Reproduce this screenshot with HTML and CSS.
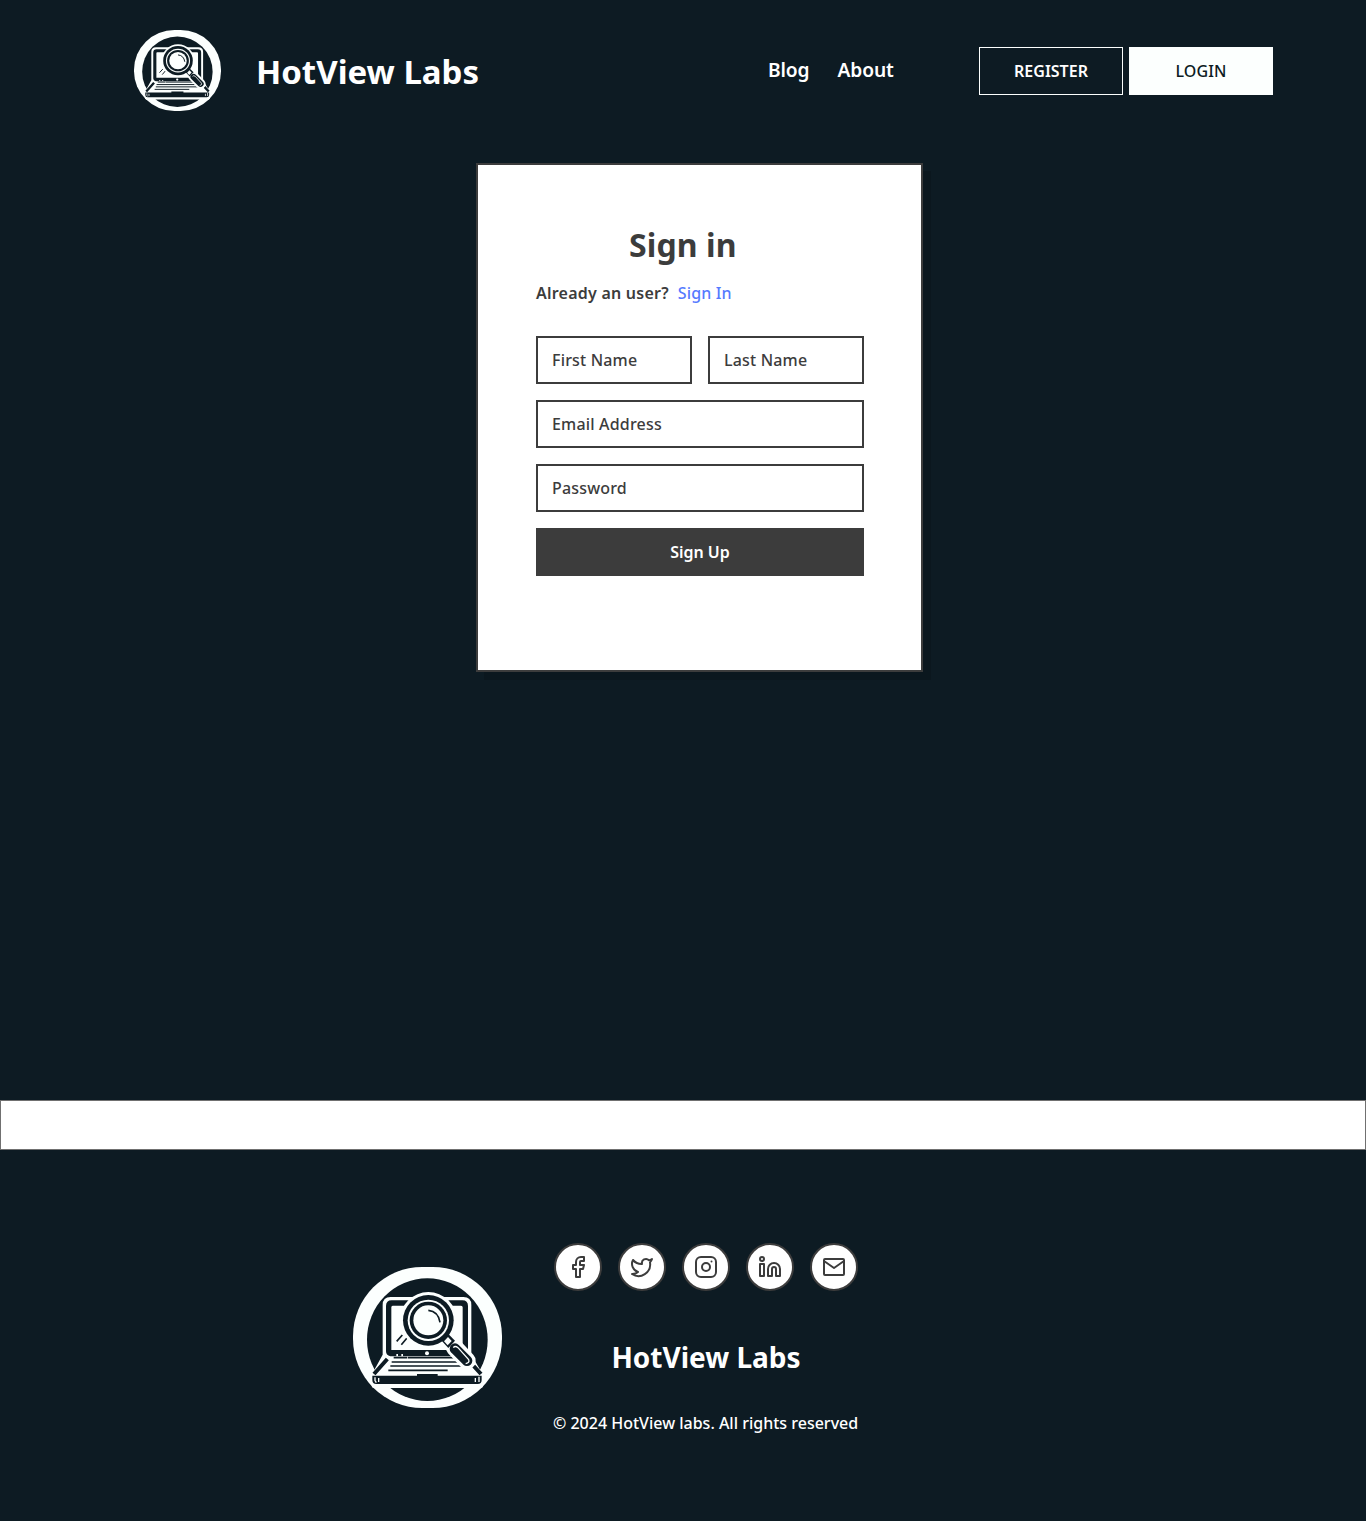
FILE: index.html
```html
<!DOCTYPE html>
<html lang="en">
<head>
<meta charset="utf-8">
<title>HotView Labs</title>
<link rel="stylesheet" href="styles.css">
</head>
<body>
<svg class="sprite" aria-hidden="true">
  <symbol id="logo" viewBox="24 21 447 423" preserveAspectRatio="none">
    <rect class="w" x="24" y="21" width="447" height="423" rx="208"/>
    <ellipse class="d" cx="247" cy="239" rx="181" ry="184"/>
    <path class="w" d="M113 284V135q0-24 24-24h218q24 0 24 24V284l35 60v34q0 6-8 6H88q-8 0-8-6v-34z"/>
    <path class="d" d="M123 274V138q0-17 17-17h212q17 0 17 17V290h-16V142q0-5-5-5H143q-4 0-4 5v128h176l16 19H136q-13-3-13-15z"/>
    <circle class="w" cx="246" cy="280" r="6"/>
    <path class="w" d="M154 289v-7h5v7zM169 289v-7h5v7z"/>
    <path class="line" d="M146 293h40M188 293h140M140 306h206M136 318h222M130 331h178"/>
    <path class="wide" d="M127 297L87 342M386 318l22 24"/>
    <path class="d" d="M82 347h134v-5h62v5h132v13q0 12-12 12H94q-12 0-12-12z"/>
    <path class="thin" d="M90 352v10l4 6M101 354v12M391 354v12M402 350v16"/>
    <path class="line" d="M155 244l17-19M169 254l17-20"/>
    <circle class="w" cx="250" cy="181" r="85"/>
    <circle class="d" cx="250" cy="181" r="76"/>
    <circle class="w" cx="250" cy="181" r="62"/>
    <circle class="d" cx="250" cy="181" r="56"/>
    <circle class="w" cx="250" cy="181" r="45"/>
    <path class="line" d="M250 151q30 3 35 36"/>
    <path class="handle-edge" d="M328 262L366 302"/>
    <path class="d" d="M290 242l20-20 20 20-20 22z"/>
    <path class="handle" d="M330 266L366 302"/>
    <path class="w" d="M297 244l12-13 11 12-12 13z"/>
    <path class="thin" d="M325 263q5-7 14 0l32 36q4 9-9 12"/>
  </symbol>
</svg>

<header class="header">
  <a class="brand" href="#">
    <svg class="brand-logo"><use href="#logo"/></svg>
    <span class="brand-name">HotView Labs</span>
  </a>
  <nav class="nav"><a href="#">Blog</a><a href="#">About</a></nav>
  <div class="actions">
    <a class="button register" href="#">REGISTER</a>
    <a class="button login" href="#">LOGIN</a>
  </div>
</header>

<main class="main">
  <form class="card">
    <h1>Sign in</h1>
    <p class="prompt">Already an user?<a href="#">Sign In</a></p>
    <div class="fields">
      <input class="field" type="text" placeholder="First Name">
      <input class="field" type="text" placeholder="Last Name">
      <input class="field full" type="email" placeholder="Email Address">
      <input class="field full" type="password" placeholder="Password">
      <button class="submit full" type="button">Sign Up</button>
    </div>
  </form>
</main>

<div class="band"></div>

<footer class="footer">
  <svg class="footer-logo"><use href="#logo"/></svg>
  <div class="footer-info">
    <div class="social">
      <a href="#"><svg viewBox="0 0 24 24"><path d="M18 2h-3a5 5 0 0 0-5 5v3H7v4h3v8h4v-8h3l1-4h-4V7a1 1 0 0 1 1-1h3z"/></svg></a>
      <a href="#"><svg viewBox="0 0 24 24"><path d="M22 4s-.7 2.1-2 3.400c1.600 10-9.400 17.300-18 11.600 2.200.1 4.400-.6 6-2C3 15.500.5 9.600 3 5c2.200 2.600 5.600 4.100 9 4-.9-4.200 4-6.600 7-3.800 1.100 0 3-1.200 3-1.200z"/></svg></a>
      <a href="#"><svg viewBox="0 0 24 24"><rect x="2" y="2" width="20" height="20" rx="5"/><circle cx="12" cy="12" r="4"/><path d="M17.500 6.500h.01"/></svg></a>
      <a href="#"><svg viewBox="0 0 24 24"><path d="M16 8a6 6 0 0 1 6 6v7h-4v-7a2 2 0 0 0-4 0v7h-4v-7a6 6 0 0 1 6-6z"/><path d="M2 9h4v12H2z"/><circle cx="4" cy="4" r="2"/></svg></a>
      <a href="#"><svg viewBox="0 0 24 24"><rect x="2" y="4" width="20" height="16" rx="1"/><path d="M22 6l-10 7L2 6"/></svg></a>
    </div>
    <div class="footer-name">HotView Labs</div>
    <div class="copyright">© 2024 HotView labs. All rights reserved</div>
  </div>
</footer>
</body>
</html>
```
FILE: styles.css
```css
* { box-sizing: border-box; }
body {
  margin: 0;
  height: 1521px;
  background: #0d1b23;
  color: #fff;
  font: 600 16px/24px "Noto Sans", sans-serif;
}
a { color: inherit; text-decoration: none; }
.sprite { display: none; }
.w { fill: #fcfffe; }
.d { fill: #0d1b23; }
.line, .wide, .thin, .handle, .handle-edge { fill: none; stroke: #0d1b23; stroke-width: 5; }
.wide { stroke-width: 12; }
.thin { stroke: #fcfffe; stroke-width: 4; }
.handle { stroke-width: 32; stroke-linecap: round; }
.handle-edge { stroke: #fcfffe; stroke-width: 52; stroke-linecap: round; }

.header {
  display: flex;
  align-items: center;
  height: 141px;
  padding: 0 93px 0 134px;
}
.brand { display: flex; align-items: center; gap: 35px; width: 634px; }
.brand-logo { width: 87px; height: 81px; }
.brand-name { font-weight: 700; font-size: 33px; line-height: 45px; padding-top: 2px; }
.nav { display: flex; gap: 28px; width: 211px; font-size: 19.2px; padding-bottom: 2px; letter-spacing: -.1px; }
.actions { display: flex; gap: 6px; padding-top: 1px; }
.button {
  width: 144px;
  height: 48px;
  border: 1px solid #fcfffe;
  line-height: 46px;
  text-align: center;
}
.login { background: #fcfffe; color: #0d1b23; font-weight: 500; letter-spacing: .1px; }

.main { height: 959px; padding: 22px 0 0 476px; }
.card {
  width: 447px;
  height: 509px;
  padding: 58px 57px 0 58px;
  border: 2px solid #3c3c3c;
  background: #fff;
  color: #3c3c3c;
  box-shadow: 8px 8px 0 rgba(0, 0, 0, .12);
}
h1 { margin: 0 0 0 93px; font-size: 32px; line-height: 44px; font-weight: 700; letter-spacing: .1px; }
.prompt { margin: 14px 0 31px; letter-spacing: .23px; }
.prompt a { margin-left: 9px; color: #567aff; font-weight: 500; letter-spacing: .15px; }
.fields { display: grid; grid-template-columns: 156px 156px; gap: 16px; }
.full { grid-column: 1 / -1; }
.field {
  min-width: 0;
  width: 100%;
  height: 48px;
  padding: 0 14px;
  border: 2px solid #3c3c3c;
  border-radius: 0;
  background: #fff;
  font: 500 16px/24px "Noto Sans", sans-serif;
  letter-spacing: .18px;
}
.field::placeholder { color: #3c3c3c; opacity: 1; }
.submit {
  height: 48px;
  border: 0;
  background: #3c3c3c;
  color: #fff;
  font: 600 16px/24px "Noto Sans", sans-serif;
}

.band { height: 50px; border: 1px solid #707070; background: #fff; }

.footer { display: flex; padding: 93px 0 0 353px; }
.footer-logo { width: 149px; height: 141px; margin-top: 24px; }
.footer-info { width: 304px; margin-left: 52px; text-align: center; }
.social { display: flex; gap: 16px; }
.social a {
  display: flex;
  align-items: center;
  justify-content: center;
  flex: none;
  width: 48px;
  height: 48px;
  border: 2px solid #3c3c3c;
  border-radius: 50%;
  background: #fff;
}
.social svg {
  width: 24px;
  height: 24px;
  fill: none;
  stroke: #3c3c3c;
  stroke-width: 2;
  stroke-linecap: round;
  stroke-linejoin: round;
}
.footer-name { margin-top: 47px; font-size: 28px; line-height: 38px; font-weight: 700; }
.copyright { margin: 35px 0 0 -1px; font-weight: 500; white-space: nowrap; }
```
